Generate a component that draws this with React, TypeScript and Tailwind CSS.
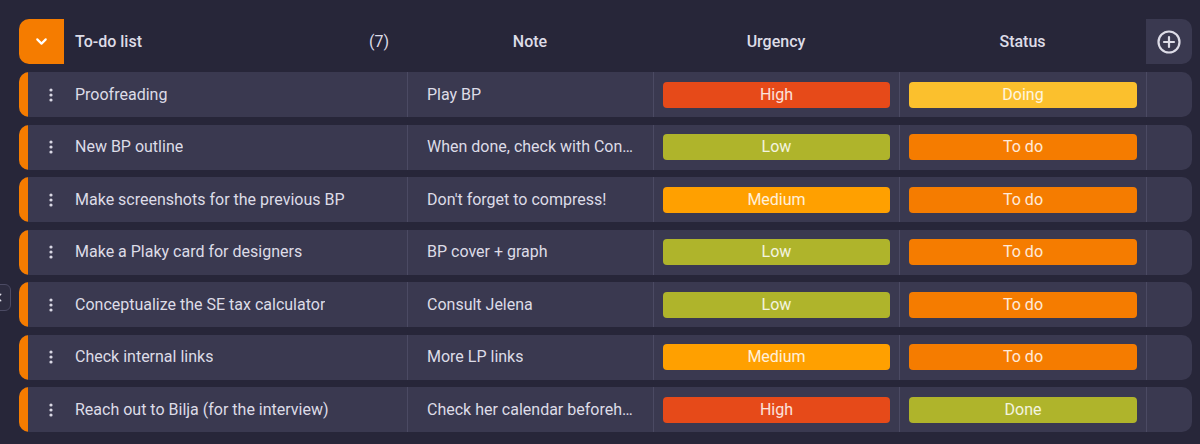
import { ChevronDown, X } from 'lucide-react';

type Row = {
  name: string;
  note: string;
  urgency: 'High' | 'Low' | 'Medium';
  status: 'Doing' | 'To do' | 'Done';
};

const rows: Row[] = [
  { name: 'Proofreading', note: 'Play BP', urgency: 'High', status: 'Doing' },
  { name: 'New BP outline', note: 'When done, check with Content team', urgency: 'Low', status: 'To do' },
  { name: 'Make screenshots for the previous BP', note: "Don't forget to compress!", urgency: 'Medium', status: 'To do' },
  { name: 'Make a Plaky card for designers', note: 'BP cover + graph', urgency: 'Low', status: 'To do' },
  { name: 'Conceptualize the SE tax calculator', note: 'Consult Jelena', urgency: 'Low', status: 'To do' },
  { name: 'Check internal links', note: 'More LP links', urgency: 'Medium', status: 'To do' },
  { name: 'Reach out to Bilja (for the interview)', note: 'Check her calendar beforehand', urgency: 'High', status: 'Done' },
];

const pillColors: Record<string, string> = {
  High: 'bg-[#e64a19]',
  Low: 'bg-[#afb42b]',
  Medium: 'bg-[#ffa000]',
  Doing: 'bg-[#fbc02d]',
  'To do': 'bg-[#f57c00]',
  Done: 'bg-[#afb42b]',
};

function Pill({ label }: { label: string }) {
  return (
    <div
      className={`h-[26px] w-full rounded-[4px] flex items-center justify-center text-[16px] text-white/85 ${pillColors[label]}`}
    >
      {label}
    </div>
  );
}

function Dots() {
  return (
    <svg width="4" height="14" viewBox="0 0 4 14" fill="#d9d8e4">
      <circle cx="2" cy="2" r="1.6" />
      <circle cx="2" cy="7" r="1.6" />
      <circle cx="2" cy="12" r="1.6" />
    </svg>
  );
}

function TaskRow({ row }: { row: Row }) {
  return (
    <div className="flex h-[45px] rounded-[10px] overflow-hidden bg-[#3a3950]">
      <div className="w-[9px] shrink-0 bg-[#f57c00]" />
      <div className="w-[379px] shrink-0 flex items-center pl-[11px]">
        <div className="w-[24px] flex justify-center">
          <Dots />
        </div>
        <span className="ml-[12px] truncate">{row.name}</span>
      </div>
      <div className="w-[246px] shrink-0 border-l border-[#4b4a63] flex items-center pl-[19px] pr-[18px]">
        <span className="truncate">{row.note}</span>
      </div>
      <div className="w-[246px] shrink-0 border-l border-[#4b4a63] flex items-center px-[9px]">
        <Pill label={row.urgency} />
      </div>
      <div className="w-[247px] shrink-0 border-l border-[#4b4a63] flex items-center px-[9px]">
        <Pill label={row.status} />
      </div>
      <div className="w-[46px] shrink-0 border-l border-[#4b4a63]" />
    </div>
  );
}

export default function App() {
  return (
    <div
      className="relative w-[1200px] h-[444px] overflow-hidden bg-[#272639] text-[#dddce7] text-[16px] pt-[19px] pl-[19px] pr-[8px]"
      style={{ fontFamily: 'Roboto, "Noto Sans", sans-serif' }}
    >
      {/* Header */}
      <div className="flex h-[45px] mb-[8px]">
        <div className="w-[45px] shrink-0 rounded-l-[10px] bg-[#f57c00] flex items-center justify-center">
          <ChevronDown size={17} strokeWidth={3} color="#ffffff" />
        </div>
        <div className="w-[343px] shrink-0 flex items-center justify-between pl-[11px] pr-[18px] font-medium">
          <span>To-do list</span>
          <span className="font-normal">(7)</span>
        </div>
        <div className="w-[246px] shrink-0 flex items-center justify-center font-medium">Note</div>
        <div className="w-[246px] shrink-0 flex items-center justify-center font-medium">Urgency</div>
        <div className="w-[247px] shrink-0 flex items-center justify-center font-medium">Status</div>
        <div className="w-[46px] shrink-0 rounded-r-[10px] bg-[#3a3950] flex items-center justify-center">
          <svg width="24" height="24" viewBox="0 0 24 24" fill="none" stroke="#dddce7" strokeWidth="2.2" strokeLinecap="round">
            <circle cx="12" cy="12" r="10.5" />
            <path d="M12 7v10M7 12h10" />
          </svg>
        </div>
      </div>

      {/* Rows */}
      <div className="flex flex-col gap-[7.5px]">
        {rows.map((r) => (
          <TaskRow key={r.name} row={r} />
        ))}
      </div>

      {/* Collapsed side toggle */}
      <div className="absolute left-[-16px] top-[284px] w-[27px] h-[27px] rounded-[6px] border border-[#4b4a63] bg-[#2d2c40] flex items-center justify-center">
        <X size={13} strokeWidth={2.5} color="#dddce7" />
      </div>
    </div>
  );
}
